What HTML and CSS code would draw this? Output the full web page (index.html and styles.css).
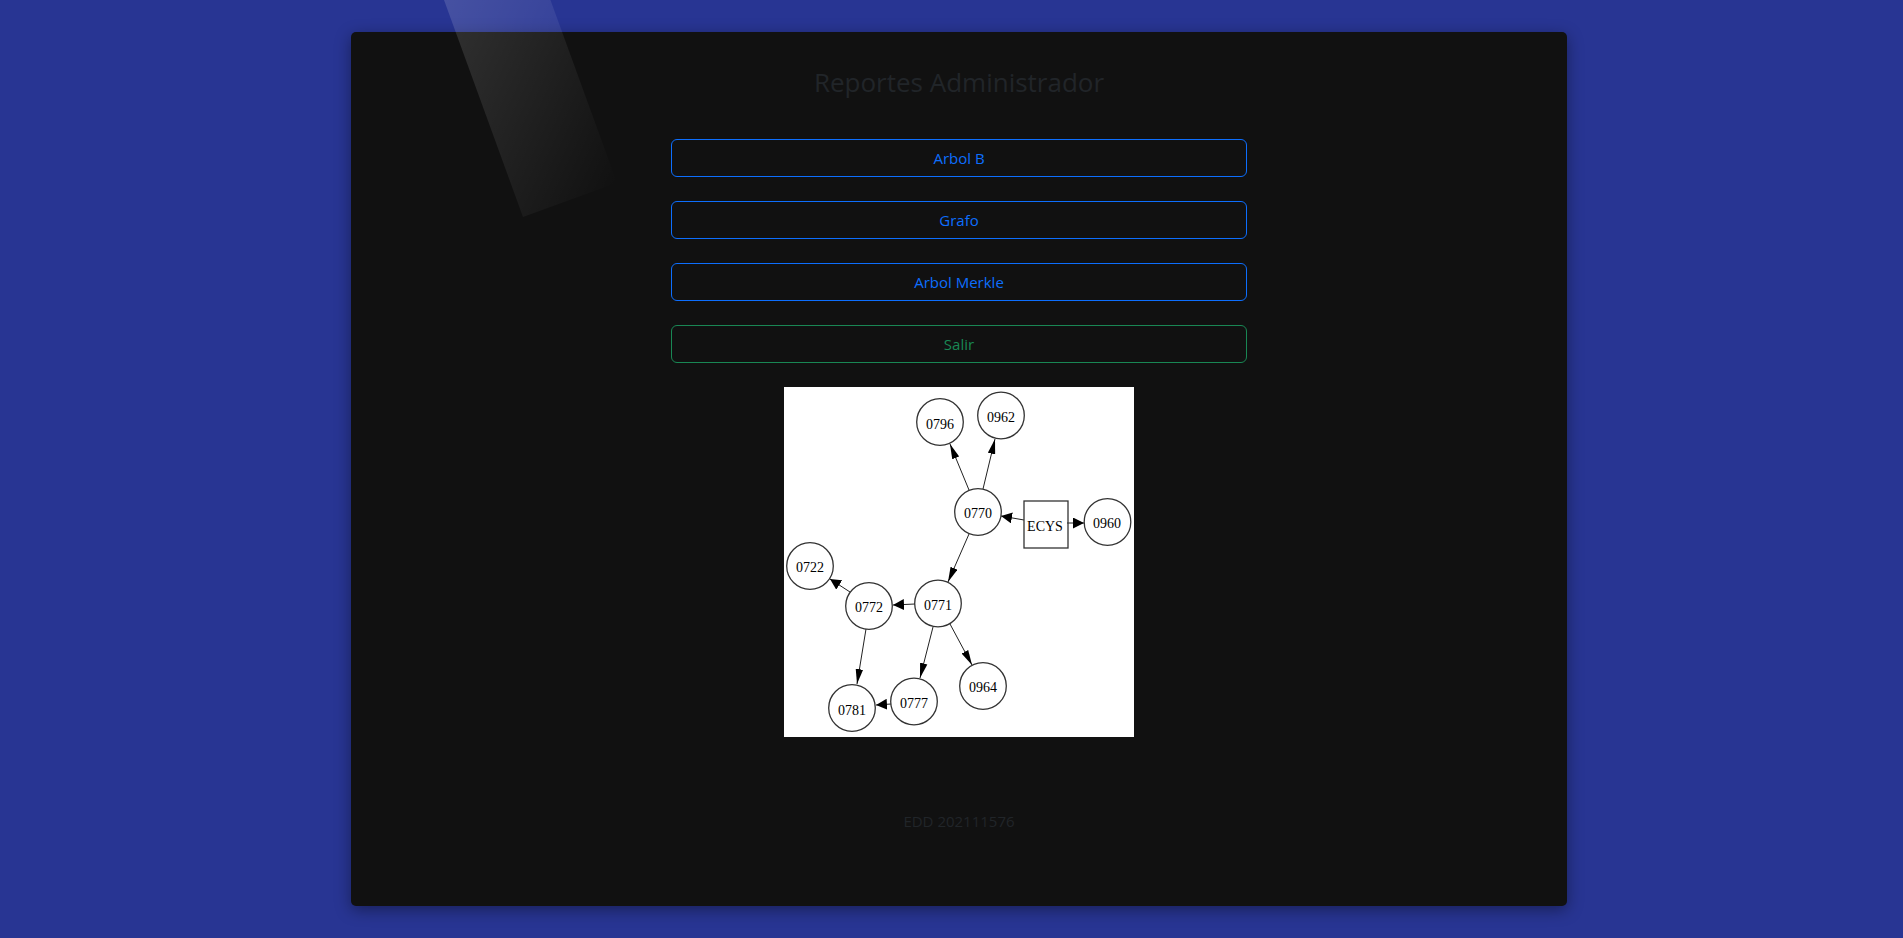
FILE: index.html
```html
<!DOCTYPE html>
<html lang="es">
<head>
  <meta charset="utf-8">
  <title>Reportes Administrador</title>
  <link rel="stylesheet" href="styles.css">
</head>
<body>
  <div class="page">
    <div class="beam" aria-hidden="true"></div>
    <main class="card">
      <h1 class="title">Reportes Administrador</h1>
      <div class="actions">
        <button type="button" class="btn">Arbol B</button>
        <button type="button" class="btn">Grafo</button>
        <button type="button" class="btn">Arbol Merkle</button>
        <button type="button" class="btn btn-exit">Salir</button>
      </div>
      <svg class="graph" viewBox="0 0 350 350" role="img" aria-label="Grafo de cursos">
        <defs>
          <marker id="wide" viewBox="0 0 10 10" refX="10" refY="5" markerWidth="11" markerHeight="11" markerUnits="userSpaceOnUse" orient="auto"><path d="M0 0 10 5 0 10z"/></marker>
          <marker id="tall" viewBox="0 0 14 7" refX="14" refY="3.5" markerWidth="15" markerHeight="8" markerUnits="userSpaceOnUse" orient="auto"><path d="M0 0 14 3.5 0 7z"/></marker>
        </defs>
        <g class="edges">
          <path marker-end="url(#tall)" d="M185 103 166 57"/>
          <path marker-end="url(#tall)" d="M199 102 211 52"/>
          <path marker-end="url(#wide)" d="M240 133 217 129"/>
          <path marker-end="url(#wide)" d="M283 136H300"/>
          <path marker-end="url(#tall)" d="M185 147 164 195"/>
          <path marker-end="url(#wide)" d="M66 205 46 192"/>
          <path marker-end="url(#wide)" d="M131 217 109 218"/>
          <path marker-end="url(#tall)" d="M82 242 73 297"/>
          <path marker-end="url(#tall)" d="M149 240 136 291"/>
          <path marker-end="url(#tall)" d="M166 237 188 278"/>
          <path marker-end="url(#wide)" d="M107 317 92 318"/>
        </g>
        <g class="nodes">
          <circle cx="156" cy="35" r="23.3"/>
          <circle cx="217" cy="28.5" r="23.3"/>
          <circle cx="194" cy="125" r="23.3"/>
          <circle cx="323.5" cy="135" r="23.3"/>
          <circle cx="26" cy="179" r="23.3"/>
          <circle cx="85" cy="219" r="23.3"/>
          <circle cx="154" cy="216.5" r="23.3"/>
          <circle cx="68" cy="321" r="23.3"/>
          <circle cx="130" cy="314.5" r="23.3"/>
          <circle cx="199" cy="299" r="23.3"/>
          <rect x="240" y="114" width="44" height="47"/>
        </g>
        <g class="labels">
          <text x="156" y="42">0796</text>
          <text x="217" y="35">0962</text>
          <text x="194" y="131">0770</text>
          <text x="261" y="144">ECYS</text>
          <text x="323" y="141">0960</text>
          <text x="26" y="185">0722</text>
          <text x="85" y="225">0772</text>
          <text x="154" y="223">0771</text>
          <text x="68" y="328">0781</text>
          <text x="130" y="321">0777</text>
          <text x="199" y="305">0964</text>
        </g>
      </svg>
      <p class="footer">EDD 202111576</p>
    </main>
  </div>
</body>
</html>
```
FILE: styles.css
```css
* {
  box-sizing: border-box;
}

body {
  margin: 0;
  background: #283593;
  color: #212529;
  font-family: "Segoe UI", "Open Sans", "Noto Sans", sans-serif;
  font-size: 15px;
  line-height: 24px;
}

.page {
  position: relative;
  display: flex;
  justify-content: center;
  min-height: 100vh;
  padding: 32px 17px 32px 32px;
  overflow: hidden;
}

.beam {
  position: absolute;
  top: -158px;
  left: 523px;
  width: 100px;
  height: 375px;
  background: linear-gradient(135deg, rgba(255, 255, 255, 0.2), rgba(255, 255, 255, 0));
  transform: rotate(-20deg);
  transform-origin: 0 100%;
  pointer-events: none;
}

.card {
  display: flex;
  flex-direction: column;
  align-items: center;
  width: 100%;
  max-width: 1216px;
  padding: 32px;
  border-radius: 5px;
  background: #111;
  box-shadow: 0 4px 16px rgba(0, 0, 0, 0.4);
}

.title {
  margin: 0 0 38px;
  font-size: 26px;
  font-weight: 400;
  line-height: 37px;
}

.actions {
  display: flex;
  flex-direction: column;
  gap: 24px;
  width: 50%;
  margin-bottom: 24px;
}

.btn {
  height: 38px;
  border: 1px solid #0d6efd;
  border-radius: 6px;
  background: transparent;
  color: #0d6efd;
  font: inherit;
  cursor: pointer;
}

.btn-exit {
  border-color: #198754;
  color: #198754;
}

.graph {
  width: 350px;
  height: 350px;
  background: #fff;
}

.edges {
  fill: none;
  stroke: #222;
  stroke-width: 1;
}

.nodes {
  fill: none;
  stroke: #333;
  stroke-width: 1.3;
}

.labels {
  fill: #000;
  font-family: "Liberation Serif", serif;
  font-size: 14px;
  text-anchor: middle;
}

.footer {
  margin: 72px 0 0;
}
```
